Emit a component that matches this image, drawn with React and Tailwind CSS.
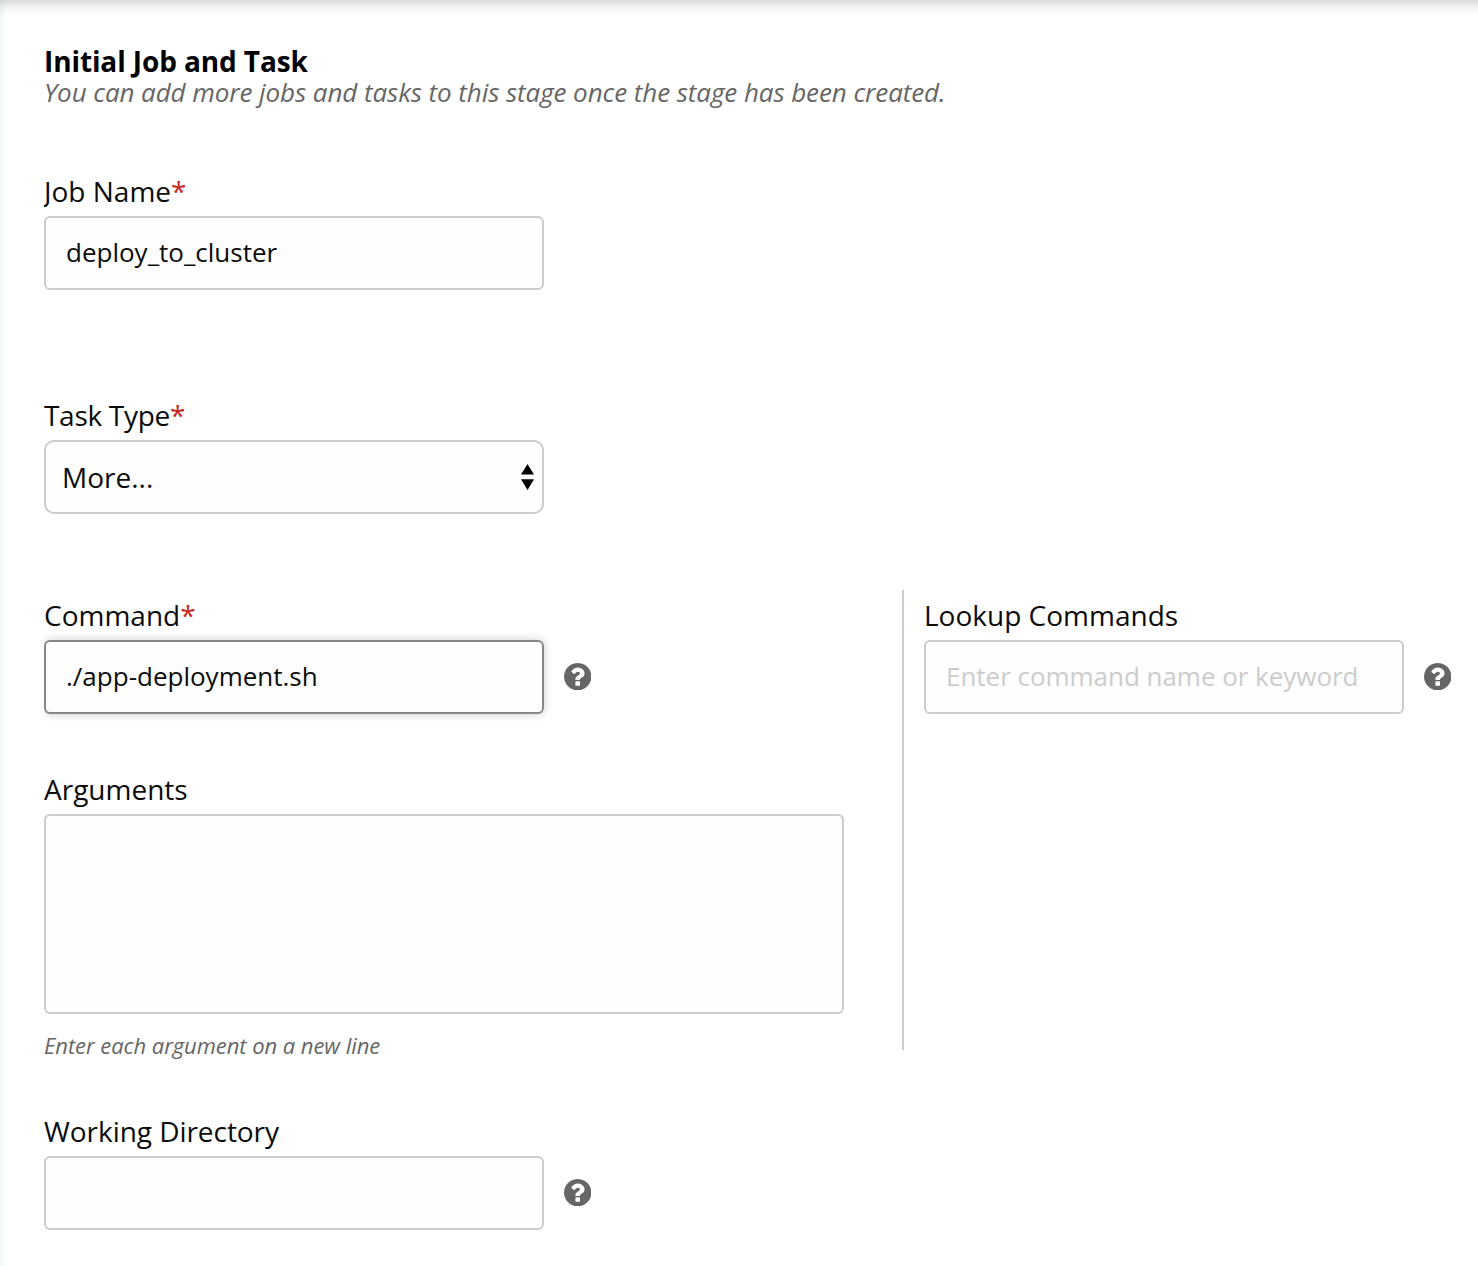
const border = "border-2 border-[#cccccc] bg-[#fefefe]";

function Label({ children, required, className = "" }) {
  return (
    <label className="mb-1.5 block h-[38px] overflow-x-clip text-[28px] leading-[38px] whitespace-nowrap">
      <span className={className}>{children}</span>
      {required && <span className="text-[#c7271e]">*</span>}
    </label>
  );
}

function Help() {
  return (
    <svg className="-mt-px ml-5 size-[27.4px] shrink-0 fill-[#666]" viewBox="128 128 1536 1536">
      <path d="M1024 1376v-192q0-14-9-23t-23-9h-192q-14 0-23 9t-9 23v192q0 14 9 23t23 9h192q14 0 23-9t9-23zm256-672q0-88-55.5-163t-138.5-116-170-41q-243 0-371 213-15 24 8 42l132 100q7 6 19 6 16 0 25-12 53-68 86-92 34-24 86-24 48 0 85.5 26t37.5 59q0 38-20 61t-68 45q-63 28-115.5 86.5t-52.5 125.5v36q0 14 9 23t23 9h192q14 0 23-9t9-23q0-19 21.5-49.5t54.5-49.5q32-18 49-28.5t46-35 44.5-48 28-60.5 12.5-81zm384 192q0 209-103 385.5t-279.5 279.5-385.5 103-385.5-103-279.5-279.5-103-385.5 103-385.5 279.5-279.5 385.5-103 385.5 103 279.5 279.5 103 385.5z" />
    </svg>
  );
}

export default function App() {
  return (
    <main className="relative h-[1266px] w-[1478px] border-l-4 border-[#f4f8f9] bg-white font-['Open_Sans',sans-serif] text-[#0b0c0b]">
      <div className="absolute top-0 right-0 -left-1 h-4 bg-linear-to-b from-black/14 via-black/4 to-transparent" />
      <div className="pt-[42px] pl-10">
        <h2 className="h-[38px] text-[28px] leading-[38px] font-bold tracking-[-0.11px] text-black whitespace-nowrap">Initial Job and Task</h2>
        <p className="-mt-1 h-8 text-[26px] leading-8 tracking-[-0.085px] italic text-[#666] whitespace-nowrap">
          You can add more jobs and tasks to this stage once the stage has been created.
        </p>

        <div className="mt-16">
          <Label required>Job Name</Label>
          <div className={`${border} flex h-[74px] w-[500px] items-center rounded-[6px] px-5 pb-0.5 text-[26px]`}>deploy_to_cluster</div>
        </div>

        <div className="mt-[106px]">
          <Label required className="tracking-[-0.3px]">Task Type</Label>
          <div className={`${border} flex h-[74px] w-[500px] items-center justify-between rounded-[10px] pr-2 pl-4 text-[28px]`}>
            <span>More...</span>
            <svg className="h-[26px] w-[13px]" viewBox="0 0 13 26"><path d="M6.5 0L13 10.5H0zM6.5 26L0 15.2h13z" /></svg>
          </div>
        </div>

        <div className="mt-[76px] flex">
          <div className="w-[858px] overflow-x-clip pt-1.5">
            <Label required>Command</Label>
            <div className="flex items-center">
              <div className="flex h-[74px] w-[500px] items-center rounded-[6px] border-2 border-[#888] bg-[#fefefe] px-5 pb-0.5 text-[26px] shadow-[0_0_10px_#ccc]">./app-deployment.sh</div>
              <Help />
            </div>
            <div className="mt-14">
              <Label>Arguments</Label>
              <div className={`${border} h-[200px] w-[800px] rounded-[6px]`} />
            </div>
          </div>
          <div className="h-[460px] w-[576px] border-l-2 border-[#cccccc] pt-1.5 pl-5">
            <Label>Lookup Commands</Label>
            <div className="flex items-center">
              <div className={`${border} flex h-[74px] w-[480px] items-center rounded-[6px] px-5 pb-0.5 text-[26px] tracking-[-0.03px] whitespace-nowrap text-[#ccc]`}>Enter command name or keyword</div>
              <Help />
            </div>
          </div>
        </div>
        <p className="-mt-[21px] h-8 text-[22px] leading-8 tracking-[-0.06px] italic text-[#666]">Enter each argument on a new line</p>

        <div className="mt-[51px]">
          <Label className="tracking-[-0.05px]">Working Directory</Label>
          <div className="flex items-center">
            <div className={`${border} h-[74px] w-[500px] rounded-[6px]`} />
            <Help />
          </div>
        </div>
      </div>
    </main>
  );
}
